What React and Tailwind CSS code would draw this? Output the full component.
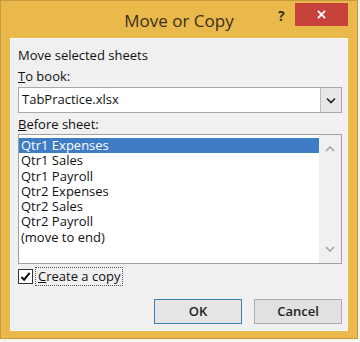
import React from 'react'

const SHEETS = ['Qtr1 Expenses', 'Qtr1 Sales', 'Qtr1 Payroll', 'Qtr2 Expenses', 'Qtr2 Sales', 'Qtr2 Payroll', '(move to end)']

function Chevron({ up = false, className = '' }) {
  return (
    <svg viewBox="0 0 10 6" className={className} fill="none" stroke="currentColor" strokeWidth={1.6}>
      <path d={up ? 'M1 5l4-4 4 4' : 'M1 1l4 4 4-4'} />
    </svg>
  )
}

export default function App() {
  return (
    <div className="w-[360px] h-[342px] bg-[#f7f5f0] font-['Open_Sans',sans-serif] text-[13px] text-[#111]">
      <div className="w-[358px] h-[339px] border border-[#c79a3e] bg-[#e9b94c] flex flex-col px-[9px] pb-[7px]">
        {/* title bar */}
        <div className="h-[37px] flex items-start relative">
          <div className="flex-1 text-center text-[17px] text-[#3b2f16] pt-[7px]">Move or Copy</div>
          <div className="absolute left-[268px] top-[4px] text-[14px] font-bold text-[#3b2f16]">?</div>
          <div className="absolute left-[285px] top-[2px] w-[53px] h-[23px] bg-[#c6423b] flex items-center justify-center">
            <svg viewBox="0 0 10 10" className="w-[9px] h-[9px]" stroke="white" strokeWidth={2}>
              <path d="M1 1l8 8M9 1l-8 8" />
            </svg>
          </div>
        </div>

        {/* body */}
        <div className="flex-1 bg-[#f0f0f0] border border-[#fafafa] pl-[7px] pr-[5px] pt-[7px] flex flex-col">
          <div className="leading-[18px]">Move selected sheets</div>
          <div className="leading-[18px] mt-[3px]"><span className="underline">T</span>o book:</div>
          <div className="mt-[2px] h-[26px] border border-[#a9a9a9] bg-white flex items-center">
            <span className="flex-1 pl-[3px]">TabPractice.xlsx</span>
            <div className="w-[21px] h-[24px] border-l border-[#bcbcbc] bg-[#e8e8e8] flex items-center justify-center text-[#222]">
              <Chevron className="w-[10px] h-[7px]" />
            </div>
          </div>
          <div className="leading-[18px] mt-[2px]"><span className="underline">B</span>efore sheet:</div>
          <div className="mt-[1px] h-[130px] border border-[#9f9f9f] bg-white flex">
            <div className="flex-1 pt-[3px]">
              {SHEETS.map((s, i) => (
                <div
                  key={i}
                  className={`h-[15.3px] leading-[15px] pl-[2px] ${i === 0 ? 'bg-[#3f7cc6] text-white' : ''}`}
                >
                  {s}
                </div>
              ))}
            </div>
            <div className="w-[22px] bg-[#f0f0f0] flex flex-col items-center justify-between py-[11px] text-[#a3a3a3]">
              <Chevron up className="w-[10px] h-[6px]" />
              <Chevron className="w-[10px] h-[6px]" />
            </div>
          </div>
          <div className="mt-[2px] flex items-center h-[20px]">
            <div className="w-[15px] h-[15px] border border-[#333] bg-white flex items-center justify-center">
              <svg viewBox="0 0 12 12" className="w-[11px] h-[11px]" fill="none" stroke="#111" strokeWidth={2.2}>
                <path d="M1.5 6.5l3 3 6-7.5" />
              </svg>
            </div>
            <div className="ml-[2px] px-[2px] border border-dotted border-[#555] leading-[17px]">
              <span className="underline">C</span>reate a copy
            </div>
          </div>
          <div className="mt-[13px] flex justify-end gap-[12px]">
            <button className="w-[88px] h-[25px] border border-[#3c7fb1] bg-[#e5e5e5] font-semibold text-[#222]">OK</button>
            <button className="w-[88px] h-[25px] border border-[#adadad] bg-[#e1e1e1] font-semibold text-[#222]">Cancel</button>
          </div>
        </div>
      </div>
    </div>
  )
}
